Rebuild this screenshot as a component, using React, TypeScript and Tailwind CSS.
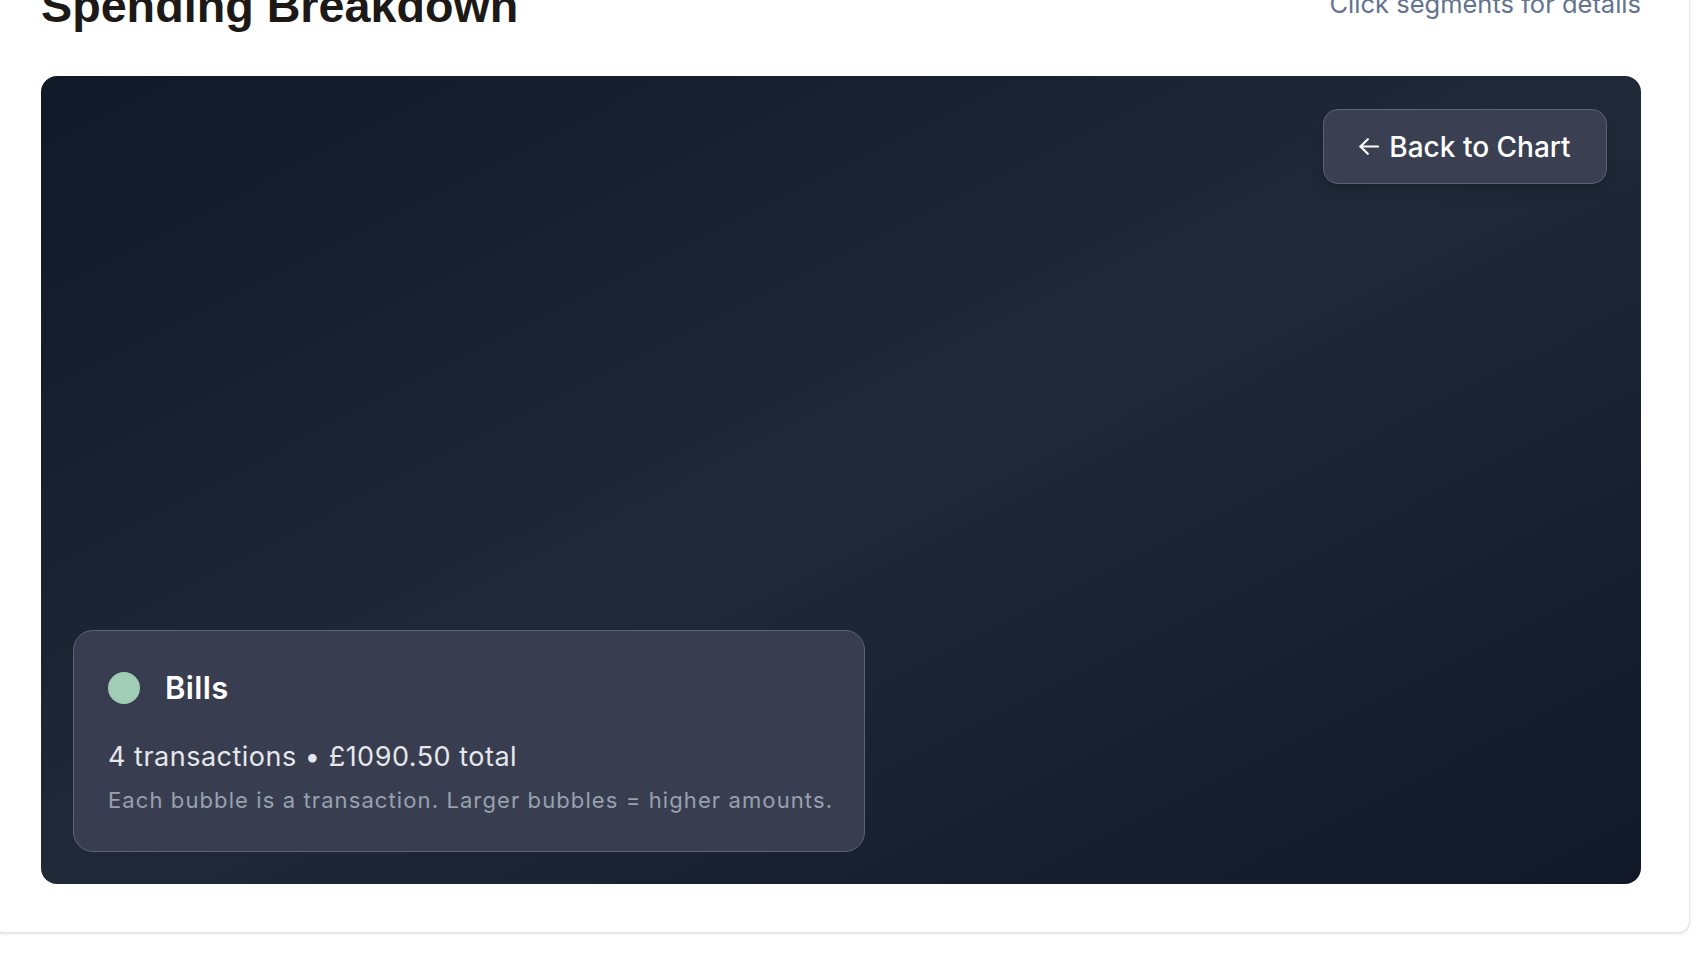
import React from "react";

type Category = {
  name: string;
  color: string;
  count: number;
  total: number;
};

const bills: Category = {
  name: "Bills",
  color: "#9fcdb5",
  count: 4,
  total: 1090.5,
};

const ArrowLeft: React.FC = () => (
  <svg width="20" height="17" viewBox="0 0 20 17" fill="none" stroke="currentColor" strokeWidth="2.2" strokeLinecap="round" strokeLinejoin="round">
    <path d="M19 8.5H1.5" />
    <path d="M8.8 1.2L1.5 8.5l7.3 7.3" />
  </svg>
);

const App: React.FC = () => {
  const cat = bills;

  return (
    <div className="h-[954px] w-full overflow-hidden bg-white font-['Inter',sans-serif]">
      <div className="-mt-[66px] -ml-2 w-[1698px] rounded-xl border border-gray-200 bg-white p-[48px] shadow-sm">
        {/* header */}
        <div className="flex items-start justify-between">
          <h2 className="font-['Liberation_Sans',Arial,sans-serif] text-[46.7px] leading-[46px] font-bold text-[#1c1917]">
            Spending Breakdown
          </h2>
          <p className="mt-[8px] text-[25.5px] leading-[26px] text-slate-500">Click segments for details</p>
        </div>

        {/* bubble canvas */}
        <div className="mt-[47px] flex h-[808px] flex-col justify-between rounded-2xl bg-linear-to-br from-[#111827] via-[#1f2937] to-[#111827] pt-[33px] pr-[34px] pb-[32px] pl-[32px]">
          <div className="flex justify-end">
            <button className="flex h-[75px] w-[284px] items-center justify-center gap-[10px] rounded-[15px] border-[1.5px] border-[#5d6373] bg-[#3a4051] text-[28px] font-medium text-white shadow-lg">
              <ArrowLeft />
              <span>Back to Chart</span>
            </button>
          </div>

          <div className="w-[792px] rounded-[20px] border-[1.5px] border-[#5d6373] bg-[#383e4f] px-[34px] pt-[39px] pb-[37px]">
            <div className="flex items-center gap-[25px]">
              <span className="size-[32px] rounded-full" style={{ backgroundColor: cat.color }} />
              <span className="text-[31px] leading-[36px] font-semibold tracking-[0.4px] text-white">{cat.name}</span>
            </div>
            <p className="mt-[35px] text-[27px] leading-[32px] tracking-[0.5px] whitespace-nowrap text-gray-200">
              {cat.count} transactions • £{cat.total.toFixed(2)} total
            </p>
            <p className="mt-[13px] text-[22px] leading-[28px] tracking-[1.1px] whitespace-nowrap text-gray-400">
              Each bubble is a transaction. Larger bubbles = higher amounts.
            </p>
          </div>
        </div>
      </div>
    </div>
  );
};

export default App;
